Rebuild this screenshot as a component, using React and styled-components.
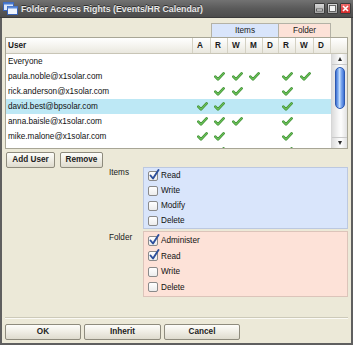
import React from 'react';
import styled, { createGlobalStyle } from 'styled-components';

const Global = createGlobalStyle`
  html, body { margin: 0; padding: 0; background: #ece9d8; }
  body { font-family: "Liberation Sans", Arial, sans-serif; }
  * { box-sizing: border-box; }
`;

const COLS = '187px 18px 17px 18px 17px 16px 17px 18px 17px';

const Window = styled.div`
  width: 353px;
  height: 345px;
  display: flex;
  flex-direction: column;
  background: #ece9d8;
  overflow: hidden;
`;

const TitleBar = styled.div`
  height: 18px;
  flex: none;
  display: flex;
  align-items: center;
  padding: 0 2px 0 3px;
  background: linear-gradient(#727272, #5a5a5a 50%, #4c4c4c);
  border-bottom: 1px solid #3a3a3a;
`;

const Title = styled.div`
  flex: 1;
  margin-left: 3px;
  color: #e8e8e8;
  font-weight: bold;
  font-size: 8.8px;
  text-shadow: 0 -1px 0 #2e2e2e;
  white-space: nowrap;
`;

const Controls = styled.div`
  display: flex;
  gap: 2px;
`;

const CtrlBtn = styled.div`
  width: 11px;
  height: 11px;
  border: 1px solid #3c3c3c;
  border-radius: 1px;
  display: flex;
  align-items: center;
  justify-content: center;
  background: ${p => (p.$close ? 'linear-gradient(#f06a6a, #d42a2a)' : 'linear-gradient(#d6d6d6, #a4a4a4)')};
`;

const Body = styled.div`
  flex: 1;
  display: flex;
  flex-direction: column;
  padding: 5px 3px 0 3px;
  border-left: 2px solid #5f5f5f;
  border-right: 2px solid #5f5f5f;
  border-bottom: 2px solid #5f5f5f;
`;

const GroupRow = styled.div`
  display: grid;
  grid-template-columns: ${COLS} 1fr;
  height: 14px;
  padding-left: 1px;
`;

const GroupCell = styled.div`
  grid-column: ${p => p.$span};
  background: ${p => p.$bg};
  border: 1px solid #b4b2a6;
  border-bottom: none;
  ${p => (p.$noLeft ? 'border-left: none;' : '')}
  font-size: 8.2px;
  line-height: 13px;
  text-align: center;
  color: #1a1a1a;
`;

const Table = styled.div`
  border: 1px solid #a8a696;
  background: #fff;
`;

const HeaderRow = styled.div`
  display: grid;
  grid-template-columns: ${COLS} 1fr;
  height: 16px;
  border-bottom: 1px solid #c8c5b6;
  background: linear-gradient(#ffffff, #f3f2ec 60%, #e9e7de);
`;

const HeaderCell = styled.div`
  border-right: ${p => (p.$last ? 'none' : '1px solid #d4d1c3')};
  padding-left: ${p => (p.$wide ? 2 : 4)}px;
  font-size: 8.2px;
  font-weight: bold;
  line-height: 15px;
  color: #1a1a1a;
`;

const ListArea = styled.div`
  display: flex;
  height: 94px;
  overflow: hidden;
`;

const Rows = styled.div`
  width: 325px;
  flex: none;
`;

const Row = styled.div`
  display: grid;
  grid-template-columns: ${COLS};
  height: 15px;
  background: ${p => (p.$selected ? '#bde8f5' : 'transparent')};
`;

const NameCell = styled.div`
  padding-left: 2px;
  font-size: 8.2px;
  line-height: 15px;
  color: #111;
  white-space: nowrap;
`;

const TickCell = styled.div`
  display: flex;
  align-items: center;
  justify-content: center;
`;

const ScrollBar = styled.div`
  flex: 1;
  display: flex;
  flex-direction: column;
  align-items: center;
  border-left: 1px solid #d6d6d6;
  background: linear-gradient(90deg, #dcdcdc, #f7f7f7 45%, #fdfdfd 60%, #e2e2e2);
`;

const ArrowBox = styled.div`
  height: ${p => p.$h}px;
  width: 100%;
  flex: none;
  display: flex;
  align-items: center;
  justify-content: center;
  border-${p => (p.$up ? 'bottom' : 'top')}: 1px solid #c9c9c9;
`;

const Arrow = styled.div`
  width: 0;
  height: 0;
  border-left: 2.5px solid transparent;
  border-right: 2.5px solid transparent;
  ${p => (p.$up ? 'border-bottom: 4px solid #2a2a2a;' : 'border-top: 4px solid #2a2a2a;')}
`;

const Track = styled.div`
  flex: 1;
  width: 100%;
  display: flex;
  justify-content: center;
  padding-top: 2px;
`;

const Thumb = styled.div`
  width: 10px;
  height: 42px;
  border-radius: 5px;
  border: 1px solid #2c58b0;
  background: linear-gradient(90deg, #3c6fd2, #8db7f3 30%, #c9e0fc 45%, #7eaaf0 65%, #3e71d4);
`;

const ButtonRow = styled.div`
  display: flex;
  gap: ${p => p.$gap}px;
`;

const Button = styled.button`
  width: ${p => p.$w}px;
  height: 16px;
  padding: 0;
  border: 1px solid #8e8b7d;
  border-radius: 2px;
  background: linear-gradient(#fdfdfa, #efede4 50%, #dedbce);
  font-family: "Liberation Sans", Arial, sans-serif;
  font-size: 8.2px;
  font-weight: bold;
  color: #222;
  line-height: 14px;
`;

const Lower = styled.div`
  display: flex;
  margin-top: 3px;
`;

const LeftCol = styled.div`
  width: 104px;
  flex: none;
  padding-left: 1px;
`;

const PermGrid = styled.div`
  flex: 1;
  display: grid;
  grid-template-columns: 34px 1fr;
  row-gap: 2px;
  margin-top: 15px;
`;

const PermLabel = styled.div`
  font-size: 8.2px;
  color: #1a1a1a;
  padding-top: ${p => p.$pt}px;
`;

const Panel = styled.div`
  background: ${p => p.$bg};
  border: 1px solid ${p => p.$bd};
  padding: ${p => p.$pt}px 0 ${p => p.$pb}px 4px;
`;

const CheckRow = styled.div`
  display: flex;
  align-items: center;
  gap: 3px;
  height: ${p => p.$h}px;
  font-size: 8.2px;
  color: #111;
`;

const Box = styled.div`
  position: relative;
  width: 10px;
  height: 10px;
  border: 1px solid #8a8a8a;
  border-radius: 2px;
  background: linear-gradient(#ffffff, #ececec);
  flex: none;
`;

const BoxTick = styled.svg`
  position: absolute;
  left: 0px;
  top: -3px;
`;

const Footer = styled.div`
  margin-top: auto;
  border-top: 1px solid #cdcab9;
  box-shadow: inset 0 1px 0 #fbfaf5;
  padding: 6px 0 3px 0;
`;

const WinIcon = () => (
  <svg width="15" height="13" viewBox="0 0 15 13">
    <rect x="0.5" y="0.5" width="10" height="8" fill="#dbe8fb" stroke="#3a64b8" />
    <rect x="0.5" y="0.5" width="10" height="2" fill="#4a7bd0" />
    <rect x="4.5" y="4.5" width="10" height="8" fill="#eef4fd" stroke="#3a64b8" />
    <rect x="4.5" y="4.5" width="10" height="2" fill="#5b8ad8" />
  </svg>
);

const GreenTick = () => (
  <svg width="11" height="9" viewBox="0 0 11 9">
    <path d="M1.3 4.6 L4 7.3 L9.6 1.4" fill="none" stroke="#3f8f33" strokeWidth="2.6" strokeLinecap="round" strokeLinejoin="round" />
    <path d="M1.3 4.6 L4 7.3 L9.6 1.4" fill="none" stroke="#6cc25a" strokeWidth="1.2" strokeLinecap="round" strokeLinejoin="round" />
  </svg>
);

const CheckBox = ({ checked }) => (
  <Box>
    {checked && (
      <BoxTick width="11" height="12" viewBox="0 0 11 12">
        <path d="M1.5 6.5 L4 9.5 L9.5 1" fill="none" stroke="#2c4f9c" strokeWidth="1.9" strokeLinecap="round" strokeLinejoin="round" />
      </BoxTick>
    )}
  </Box>
);

const users = [
  { name: 'Everyone', t: [] },
  { name: 'paula.noble@x1solar.com', t: [1, 2, 3, 5, 6] },
  { name: 'rick.anderson@x1solar.com', t: [1, 2, 5] },
  { name: 'david.best@bpsolar.com', t: [0, 1, 5], sel: true },
  { name: 'anna.baisle@x1solar.com', t: [0, 1, 2, 5] },
  { name: 'mike.malone@x1solar.com', t: [0, 1, 5] },
  { name: '', t: [1, 5] },
];

const headers = ['A', 'R', 'W', 'M', 'D', 'R', 'W', 'D'];

export default function App() {
  return (
    <Window>
      <Global />
      <TitleBar>
        <WinIcon />
        <Title>Folder Access Rights (Events/HR Calendar)</Title>
        <Controls>
          <CtrlBtn>
            <svg width="7" height="7" viewBox="0 0 7 7"><rect x="0.5" y="4" width="6" height="2" fill="#f4f4f4" stroke="#4a4a4a" strokeWidth="0.8" /></svg>
          </CtrlBtn>
          <CtrlBtn>
            <svg width="7" height="7" viewBox="0 0 7 7"><rect x="0.5" y="0.5" width="6" height="6" fill="#f4f4f4" stroke="#4a4a4a" strokeWidth="0.8" /></svg>
          </CtrlBtn>
          <CtrlBtn $close>
            <svg width="7" height="7" viewBox="0 0 7 7"><path d="M1 1 L6 6 M6 1 L1 6" stroke="#fff" strokeWidth="1.6" /></svg>
          </CtrlBtn>
        </Controls>
      </TitleBar>
      <Body>
        <GroupRow>
          <GroupCell $span="3 / 7" $bg="#d9e5fb">Items</GroupCell>
          <GroupCell $span="7 / 10" $bg="#fde2d8" $noLeft>Folder</GroupCell>
        </GroupRow>
        <Table>
          <HeaderRow>
            <HeaderCell $wide>User</HeaderCell>
            {headers.map((h, i) => (
              <HeaderCell key={i}>{h}</HeaderCell>
            ))}
            <HeaderCell $last />
          </HeaderRow>
          <ListArea>
            <Rows>
              {users.map((u, idx) => (
                <Row key={idx} $selected={u.sel}>
                  <NameCell>{u.name}</NameCell>
                  {headers.map((_, i) => (
                    <TickCell key={i}>{u.t.includes(i) && <GreenTick />}</TickCell>
                  ))}
                </Row>
              ))}
            </Rows>
            <ScrollBar>
              <ArrowBox $h={11} $up><Arrow $up /></ArrowBox>
              <Track><Thumb /></Track>
              <ArrowBox $h={11}><Arrow /></ArrowBox>
            </ScrollBar>
          </ListArea>
        </Table>
        <Lower>
          <LeftCol>
            <ButtonRow $gap={5}>
              <Button $w={49}>Add User</Button>
              <Button $w={43}>Remove</Button>
            </ButtonRow>
          </LeftCol>
          <PermGrid>
            <PermLabel $pt={1}>Items</PermLabel>
            <Panel $bg="#d9e5fb" $bd="#bcc8e0" $pt={0} $pb={0}>
              {['Read', 'Write', 'Modify', 'Delete'].map((l, i) => (
                <CheckRow key={l} $h={15}><CheckBox checked={i === 0} />{l}</CheckRow>
              ))}
            </Panel>
            <PermLabel $pt={2}>Folder</PermLabel>
            <Panel $bg="#fde2d8" $bd="#dcc4ba" $pt={1} $pb={1}>
              {['Administer', 'Read', 'Write', 'Delete'].map((l, i) => (
                <CheckRow key={l} $h={15.5}><CheckBox checked={i < 2} />{l}</CheckRow>
              ))}
            </Panel>
          </PermGrid>
        </Lower>
        <Footer>
          <ButtonRow $gap={3}>
            <Button $w={76}>OK</Button>
            <Button $w={77}>Inherit</Button>
            <Button $w={76}>Cancel</Button>
          </ButtonRow>
        </Footer>
      </Body>
    </Window>
  );
}
